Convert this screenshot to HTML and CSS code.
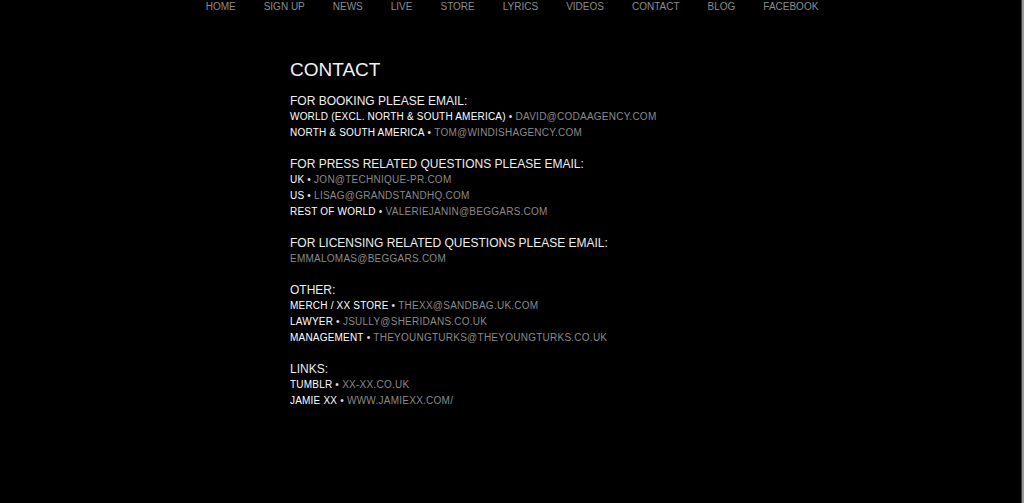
FILE: index.html
```html
<!DOCTYPE html>
<html lang="en">
  <head>
    <meta charset="UTF-8" />
    <meta name="viewport" content="width=device-width, initial-scale=1.0" />
    <title>Contact</title>
    <link rel="stylesheet" href="styles.css">
  </head>
  <body>
    <!-- Navigation -->
    <ul class="nav">
      <li><a href="#">HOME</a></li>
      <li><a href="#">SIGN UP</a></li>
      <li><a href="#">NEWS</a></li>
      <li><a href="#">LIVE</a></li>
      <li><a href="#">STORE</a></li>
      <li><a href="#">LYRICS</a></li>
      <li><a href="#">VIDEOS</a></li>
      <li><a href="#">CONTACT</a></li>
      <li><a href="#">BLOG</a></li>
      <li><a href="#">FACEBOOK</a></li>
    </ul>

    <!-- Content -->
    <div class="content">
      <h1>CONTACT</h1>

      <div class="section">
        <h2>FOR BOOKING PLEASE EMAIL:</h2>
        <p><span class="label">WORLD (EXCL. NORTH &amp; SOUTH AMERICA)</span> &bull; <a href="#">DAVID@CODAAGENCY.COM</a></p>
        <p><span class="label">NORTH &amp; SOUTH AMERICA</span> &bull; <a href="#">TOM@WINDISHAGENCY.COM</a></p>
      </div>

      <div class="section">
        <h2>FOR PRESS RELATED QUESTIONS PLEASE EMAIL:</h2>
        <p><span class="label">UK</span> &bull; <a href="#">JON@TECHNIQUE-PR.COM</a></p>
        <p><span class="label">US</span> &bull; <a href="#">LISAG@GRANDSTANDHQ.COM</a></p>
        <p><span class="label">REST OF WORLD</span> &bull; <a href="#">VALERIEJANIN@BEGGARS.COM</a></p>
      </div>

      <div class="section">
        <h2>FOR LICENSING RELATED QUESTIONS PLEASE EMAIL:</h2>
        <p><a href="#">EMMALOMAS@BEGGARS.COM</a></p>
      </div>

      <div class="section">
        <h2>OTHER:</h2>
        <p><span class="label">MERCH / XX STORE</span> &bull; <a href="#">THEXX@SANDBAG.UK.COM</a></p>
        <p><span class="label">LAWYER</span> &bull; <a href="#">JSULLY@SHERIDANS.CO.UK</a></p>
        <p><span class="label">MANAGEMENT</span> &bull; <a href="#">THEYOUNGTURKS@THEYOUNGTURKS.CO.UK</a></p>
      </div>

      <div class="section">
        <h2>LINKS:</h2>
        <p><span class="label">TUMBLR</span> &bull; <a href="#">XX-XX.CO.UK</a></p>
        <p><span class="label">JAMIE XX</span> &bull; <a href="#">WWW.JAMIEXX.COM/</a></p>
      </div>
    </div>

    <div class="edge"></div>
  </body>
</html>
```

FILE: styles.css
```css
body {
  margin: 0;
  background: #000;
  color: #e6e6e6;
  font-family: "Liberation Sans", Arial, sans-serif;
  min-height: 503px;
}

a {
  color: #8a8a8a;
  text-decoration: none;
}

.nav {
  list-style: none;
  margin: 0;
  padding: 0;
  display: flex;
  justify-content: center;
  gap: 28px;
  height: 14px;
  line-height: 13px;
  font-size: 10px;
}

.nav a {
  color: #8c8c8c;
}

.content {
  width: 444px;
  margin: 0 auto;
  padding-top: 45px;
}

.content h1 {
  margin: 0 0 12px;
  font-size: 19px;
  font-weight: normal;
  line-height: 22px;
  color: #f0f0f0;
}

.section {
  margin-bottom: 15px;
}

.section h2 {
  margin: 0;
  font-size: 12px;
  font-weight: normal;
  line-height: 16px;
  color: #eee;
}

.section p {
  margin: 0;
  font-size: 10px;
  line-height: 16px;
  color: #e0e0e0;
  letter-spacing: 0.25px;
}

.section .label {
  letter-spacing: 0.2px;
  color: #fff;
}

.edge {
  position: fixed;
  top: 0;
  right: 0;
  width: 2px;
  height: 100%;
  background: #9a9a9a;
  border-left: 1px solid #3a3a3a;
}
```
